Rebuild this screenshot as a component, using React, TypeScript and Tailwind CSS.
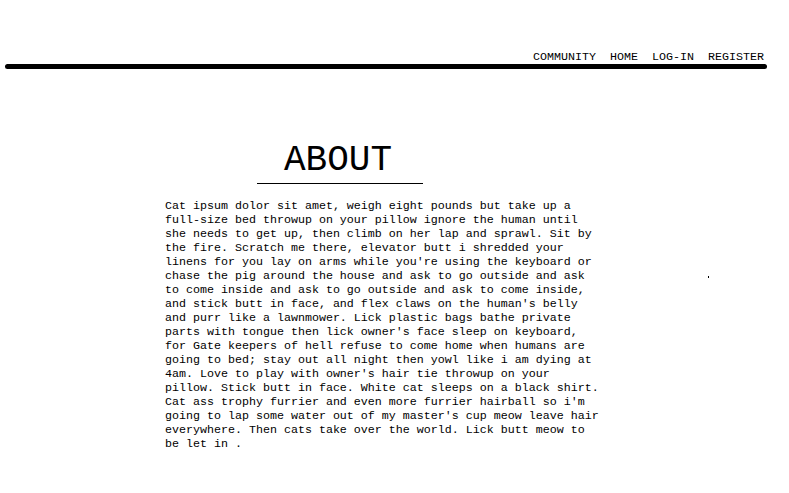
export default function App() {
  const links = ["COMMUNITY", "HOME", "LOG-IN", "REGISTER"];

  return (
    <div className="relative min-h-[493px] bg-white pt-[50px] text-black font-['Liberation_Mono','Courier_New',monospace]">
      <nav className="flex justify-end gap-[14px] pr-[25px] text-[11.67px] leading-[14px]">
        {links.map((l) => (
          <a key={l} href="#" className="text-black">
            {l}
          </a>
        ))}
      </nav>
      <div className="ml-[5px] mr-[22px] h-[5px] rounded-full bg-black" />

      <main className="ml-[165px] mt-[70px] w-[437px]">
        <div className="ml-[92px] w-[166px] border-b border-black pt-[2px] pb-[2px] pl-[27px]">
          <h1 className="text-[36px] leading-[40px]">ABOUT</h1>
        </div>
        <p className="mt-[15px] text-[11.67px] leading-[14px]">
          Cat ipsum dolor sit amet, weigh eight pounds but take up a full-size
          bed throwup on your pillow ignore the human until she needs to get up,
          then climb on her lap and sprawl. Sit by the fire. Scratch me there,
          elevator butt i shredded your linens for you lay on arms while you're
          using the keyboard or chase the pig around the house and ask to go
          outside and ask to come inside and ask to go outside and ask to come
          inside, and stick butt in face, and flex claws on the human's belly and
          purr like a lawnmower. Lick plastic bags bathe private parts with
          tongue then lick owner's face sleep on keyboard, for Gate keepers of
          hell refuse to come home when humans are going to bed; stay out all
          night then yowl like i am dying at 4am. Love to play with owner's hair
          tie throwup on your pillow. Stick butt in face. White cat sleeps on a
          black shirt. Cat ass trophy furrier and even more furrier hairball so
          i'm going to lap some water out of my master's cup meow leave hair
          everywhere. Then cats take over the world. Lick butt meow to be let in
          .
        </p>
      </main>

      <span className="absolute left-[708px] top-[276px] h-[2px] w-[1px] bg-black" />
    </div>
  );
}
